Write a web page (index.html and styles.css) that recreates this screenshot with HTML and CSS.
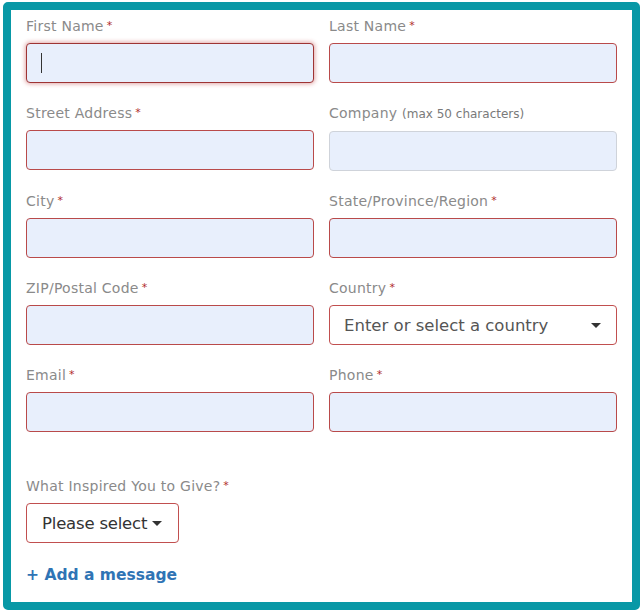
FILE: index.html
```html
<!DOCTYPE html>
<html lang="en">
<head>
<meta charset="utf-8">
<link rel="stylesheet" href="styles.css">
</head>
<body>
<div class="frame">
  <form class="form">
    <div class="grid">
      <div class="field">
        <label class="label">First Name<span class="req">*</span></label>
        <div class="input focused"><span class="caret"></span></div>
      </div>
      <div class="field">
        <label class="label">Last Name<span class="req">*</span></label>
        <div class="input"></div>
      </div>
      <div class="field">
        <label class="label">Street Address<span class="req">*</span></label>
        <div class="input"></div>
      </div>
      <div class="field">
        <label class="label">Company <span class="hint">(max 50 characters)</span></label>
        <div class="input optional"></div>
      </div>
      <div class="field">
        <label class="label">City<span class="req">*</span></label>
        <div class="input"></div>
      </div>
      <div class="field">
        <label class="label">State/Province/Region<span class="req">*</span></label>
        <div class="input"></div>
      </div>
      <div class="field">
        <label class="label">ZIP/Postal Code<span class="req">*</span></label>
        <div class="input"></div>
      </div>
      <div class="field">
        <label class="label">Country<span class="req">*</span></label>
        <div class="select wide"><span class="select-text">Enter or select a country</span><span class="tri"></span></div>
      </div>
      <div class="field">
        <label class="label">Email<span class="req">*</span></label>
        <div class="input"></div>
      </div>
      <div class="field">
        <label class="label">Phone<span class="req">*</span></label>
        <div class="input"></div>
      </div>
    </div>
    <div class="field inspire">
      <label class="label">What Inspired You to Give?<span class="req">*</span></label>
      <div class="select short"><span class="select-text dark">Please select</span><span class="tri"></span></div>
    </div>
    <a class="add" href="#">+ Add a message</a>
  </form>
</div>
</body>
</html>
```
FILE: styles.css
```css
* { box-sizing: border-box; }
html, body { margin: 0; padding: 0; background: #fff; }
body { font-family: "DejaVu Sans", "Liberation Sans", sans-serif; }
.frame {
  margin: 2px 3px 4px 3px;
  width: 637px;
  height: 608px;
  border: 8px solid #0898a6;
  border-radius: 5px;
  background: #fff;
}
.form { padding: 6px 14px 0 15px; }
.grid {
  display: grid;
  grid-template-columns: 288px 288px;
  column-gap: 15px;
  row-gap: 20px;
}
.field { display: flex; flex-direction: column; }
.label {
  font-size: 14px;
  line-height: 20px;
  color: #8a8a8a;
  margin-bottom: 7px;
  letter-spacing: 0.25px;
}
.req { color: #b02a2a; font-size: 11px; margin-left: 3px; vertical-align: 2px; }
.hint { font-size: 12px; color: #7a7a7a; letter-spacing: 0; }
.input {
  height: 40px;
  border: 1px solid #b94a4a;
  border-radius: 4px;
  background: #e8effc;
  display: flex;
  align-items: center;
  padding-left: 14px;
}
.input.focused {
  box-shadow: 0 0 4px 1px rgba(190, 60, 60, 0.45);
  border-color: #9e3434;
}
.input.optional { border-color: #cfd3da; }
.caret { width: 1px; height: 20px; background: #333; }
.select {
  height: 40px;
  border: 1px solid #c14f4f;
  border-radius: 4px;
  background: #fff;
  display: flex;
  align-items: center;
  justify-content: space-between;
}
.select.wide { padding: 0 15px 0 14px; }
.select.short { width: 153px; padding: 0 16px 0 15px; }
.select-text { font-size: 16.5px; color: #555; letter-spacing: 0; }
.select-text.dark { color: #333; letter-spacing: -0.2px; }
.tri {
  width: 0; height: 0;
  border-left: 5px solid transparent;
  border-right: 5px solid transparent;
  border-top: 5px solid #333;
}
.inspire { margin-top: 44px; }
.add {
  display: inline-block;
  margin-top: 21px;
  font-size: 15.5px;
  line-height: 22px;
  font-weight: bold;
  color: #2f74b5;
  text-decoration: none;
}
```
